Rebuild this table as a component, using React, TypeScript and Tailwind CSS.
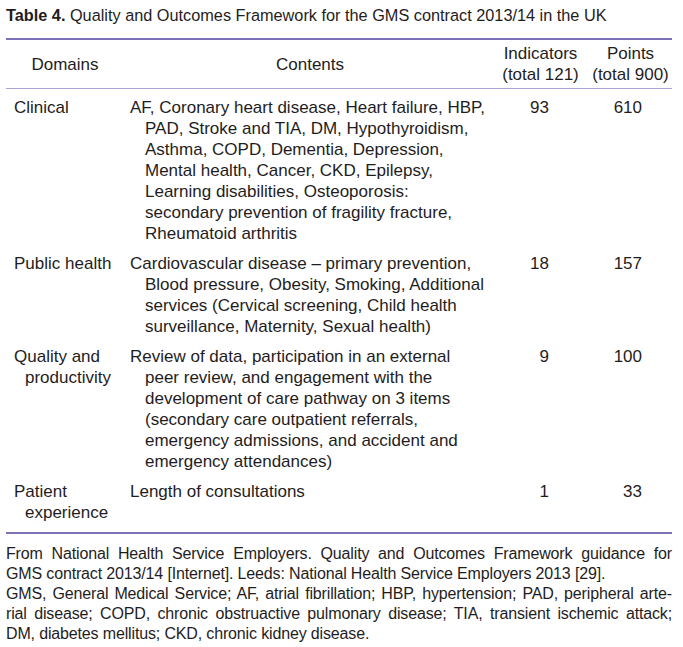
import React from 'react';

type Row = {
  domain: string[];
  contents: string[];
  indicators: string;
  points: string;
};

const rows: Row[] = [
  {
    domain: ['Clinical'],
    contents: [
      'AF, Coronary heart disease, Heart failure, HBP,',
      'PAD, Stroke and TIA, DM, Hypothyroidism,',
      'Asthma, COPD, Dementia, Depression,',
      'Mental health, Cancer, CKD, Epilepsy,',
      'Learning disabilities, Osteoporosis:',
      'secondary prevention of fragility fracture,',
      'Rheumatoid arthritis',
    ],
    indicators: '93',
    points: '610',
  },
  {
    domain: ['Public health'],
    contents: [
      'Cardiovascular disease \u2013 primary prevention,',
      'Blood pressure, Obesity, Smoking, Additional',
      'services (Cervical screening, Child health',
      'surveillance, Maternity, Sexual health)',
    ],
    indicators: '18',
    points: '157',
  },
  {
    domain: ['Quality and', 'productivity'],
    contents: [
      'Review of data, participation in an external',
      'peer review, and engagement with the',
      'development of care pathway on 3 items',
      '(secondary care outpatient referrals,',
      'emergency admissions, and accident and',
      'emergency attendances)',
    ],
    indicators: '9',
    points: '100',
  },
  {
    domain: ['Patient', 'experience'],
    contents: ['Length of consultations'],
    indicators: '1',
    points: '33',
  },
];

const font = { fontFamily: '"Liberation Sans", Arial, sans-serif' };

function Lines({ lines, indent }: { lines: string[]; indent: string }) {
  return (
    <div>
      {lines.map((line, i) => (
        <div key={i} className={i === 0 ? '' : indent}>
          {line}
        </div>
      ))}
    </div>
  );
}

export default function App() {
  return (
    <div className="w-[683px] h-[647px] bg-white text-[#1f1d1e]" style={font}>
      <div className="pl-[6px] pt-[5px] text-[16.3px] leading-[21px]">
        <span className="font-bold">Table 4.</span> Quality and Outcomes Framework for the GMS contract 2013/14 in the UK
      </div>

      <div className="mx-[6px] mt-[12px] w-[666px] text-[17px] leading-[21px]">
        {/* header */}
        <div className="grid grid-cols-[118px_372px_89px_87px] border-t-2 border-[#7b72b8] pt-[3px] pb-[3px] border-b border-b-[#aaa4d6]">
          <div className="flex items-center justify-center">Domains</div>
          <div className="flex items-center justify-center">Contents</div>
          <div className="text-center">
            <div>Indicators</div>
            <div>(total 121)</div>
          </div>
          <div className="text-center pl-[4px]">
            <div>Points</div>
            <div>(total 900)</div>
          </div>
        </div>

        {/* body */}
        <div className="pt-[8px] pb-[9px] border-b-2 border-[#7b72b8] flex flex-col gap-[9px]">
          {rows.map((row) => (
            <div key={row.domain[0]} className="grid grid-cols-[118px_372px_89px_87px]">
              <div className="pl-[8px]">
                <Lines lines={row.domain} indent="pl-[11px]" />
              </div>
              <div className="pl-[6px]">
                <Lines lines={row.contents} indent="pl-[15px]" />
              </div>
              <div className="text-right pr-[36px]">{row.indicators}</div>
              <div className="text-right pr-[30px]">{row.points}</div>
            </div>
          ))}
        </div>
      </div>

      {/* footnote */}
      <div className="mx-[6px] mt-[10px] w-[666px] text-[16px] leading-[20px] tracking-[-0.15px]">
        <div className="text-justify [text-align-last:justify]">
          From National Health Service Employers. Quality and Outcomes Framework guidance for
        </div>
        <div>GMS contract 2013/14 [Internet]. Leeds: National Health Service Employers 2013 [29].</div>
        <div className="text-justify [text-align-last:justify]">
          GMS, General Medical Service; AF, atrial fibrillation; HBP, hypertension; PAD, peripheral arte-
        </div>
        <div className="text-justify [text-align-last:justify]">
          rial disease; COPD, chronic obstruactive pulmonary disease; TIA, transient ischemic attack;
        </div>
        <div>DM, diabetes mellitus; CKD, chronic kidney disease.</div>
      </div>
    </div>
  );
}
